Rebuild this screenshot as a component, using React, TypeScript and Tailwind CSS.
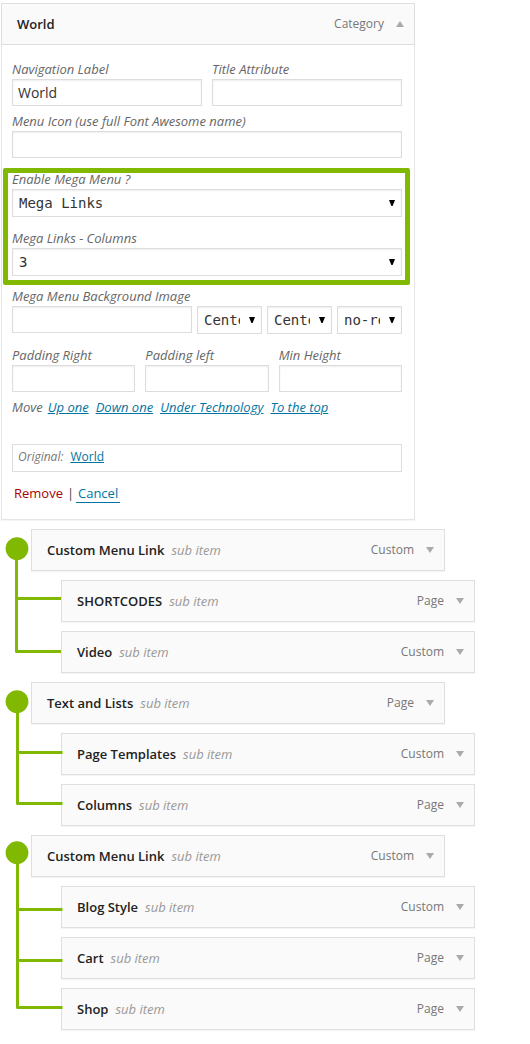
import type { ReactNode } from 'react'

type Item = { title: string; kind: string }
type Group = {
  parent: Item
  children: Item[]
  dotY: number
  lineX: number
  endX: number
  branches: number[]
}

const groups: Group[] = [
  {
    parent: { title: 'Custom Menu Link', kind: 'Custom' },
    children: [
      { title: 'SHORTCODES', kind: 'Page' },
      { title: 'Video', kind: 'Custom' },
    ],
    dotY: 19.6,
    lineX: 16.5,
    endX: 61,
    branches: [69.5, 122.5],
  },
  {
    parent: { title: 'Text and Lists', kind: 'Page' },
    children: [
      { title: 'Page Templates', kind: 'Custom' },
      { title: 'Columns', kind: 'Page' },
    ],
    dotY: 19.6,
    lineX: 17.5,
    endX: 62.5,
    branches: [70.5, 121.5],
  },
  {
    parent: { title: 'Custom Menu Link', kind: 'Custom' },
    children: [
      { title: 'Blog Style', kind: 'Custom' },
      { title: 'Cart', kind: 'Page' },
      { title: 'Shop', kind: 'Page' },
    ],
    dotY: 17.7,
    lineX: 17.5,
    endX: 62.5,
    branches: [74.5, 125.5, 172.5],
  },
]

const inputClass =
  'block h-[27px] w-full min-w-0 border border-[#ddd] bg-white px-[5px] text-sm text-[#333] shadow-[inset_0_1px_2px_rgba(0,0,0,0.07)] outline-none focus:border-[#5b9dd9]'

const linkClass = 'text-[#0074a2] underline'

function Triangle({ up = false }: { up?: boolean }) {
  return (
    <svg width="8" height="6" viewBox="0 0 8 6" fill="#aaa" aria-hidden="true">
      <path d={up ? 'M4 0 8 6H0Z' : 'M0 0H8L4 6Z'} />
    </svg>
  )
}

function Label({ htmlFor, children }: { htmlFor: string; children: ReactNode }) {
  return (
    <label htmlFor={htmlFor} className="block whitespace-nowrap text-[13px] leading-5 text-[#666] italic">
      {children}
    </label>
  )
}

function TextField({ id, label, value }: { id: string; label: string; value?: string }) {
  return (
    <div className="min-w-0">
      <Label htmlFor={id}>{label}</Label>
      <input id={id} type="text" defaultValue={value} className={inputClass} />
    </div>
  )
}

function Select({ id, label, options }: { id: string; label?: string; options: string[] }) {
  return (
    <div className="relative">
      <select
        id={id}
        aria-label={label}
        className="block h-7 w-full appearance-none border border-[#ddd] bg-white pr-[21px] pl-1.5 font-['DejaVu_Sans_Mono',monospace] text-sm text-[#333] shadow-[inset_0_1px_2px_rgba(0,0,0,0.07)] outline-none"
      >
        {options.map((option) => (
          <option key={option}>{option}</option>
        ))}
      </select>
      <svg
        className="pointer-events-none absolute top-[11px] right-[7px]"
        width="6"
        height="6"
        viewBox="0 0 6 6"
        aria-hidden="true"
      >
        <path d="M0 0H6L3.6 6H2.4Z" />
      </svg>
    </div>
  )
}

function ItemBar({ item, open = false, sub = true }: { item: Item; open?: boolean; sub?: boolean }) {
  return (
    <div className="flex h-[42px] w-full max-w-[414px] items-center justify-between border border-[#dfdfdf] bg-[#fafafa] pr-2.5 pl-[15px] shadow-[0_1px_1px_rgba(0,0,0,0.04)]">
      <div className="flex items-center gap-[7px] text-[13px] leading-5">
        <span className="font-semibold text-[#222]">{item.title}</span>
        {sub && <span className="text-[#999] italic">sub item</span>}
      </div>
      <button
        type="button"
        aria-expanded={open}
        className="flex items-center gap-3 text-xs text-[#777]"
      >
        {item.kind}
        <Triangle up={open} />
      </button>
    </div>
  )
}

function Connector({ dotY, lineX, endX, branches }: Group) {
  const last = branches[branches.length - 1]
  return (
    <svg
      className="pointer-events-none absolute top-0 left-0"
      width="64"
      height="200"
      viewBox="0 0 64 200"
      fill="none"
      stroke="#81b802"
      strokeWidth="3"
      strokeLinejoin="round"
      aria-hidden="true"
    >
      <circle cx="17" cy={dotY} r="11.4" fill="#81b802" stroke="none" />
      <path d={`M${lineX} ${dotY}V${last}H${endX}`} />
      {branches.slice(0, -1).map((y) => (
        <path key={y} d={`M${lineX} ${y}H${endX}`} />
      ))}
    </svg>
  )
}

function Settings() {
  return (
    <form className="border-x border-b border-[#e5e5e5] bg-white pt-3.5 pr-3 pb-4 pl-2.5 shadow-[0_1px_1px_rgba(0,0,0,0.04)]">
      <div className="grid grid-cols-2 gap-2.5">
        <TextField id="nav-label" label="Navigation Label" value="World" />
        <TextField id="title-attr" label="Title Attribute" />
      </div>
      <div className="mt-[5px]">
        <TextField id="menu-icon" label="Menu Icon (use full Font Awesome name)" />
      </div>

      <div className="relative mt-[11px] flex flex-col gap-[11px]">
        <div>
          <Label htmlFor="mega-menu">Enable Mega Menu ?</Label>
          <Select id="mega-menu" options={['Mega Links', 'Mega Posts', 'Disable']} />
        </div>
        <div>
          <Label htmlFor="mega-columns">Mega Links - Columns</Label>
          <Select id="mega-columns" options={['3', '2', '4', '5']} />
        </div>
        <div className="pointer-events-none absolute -top-px -right-2 -bottom-[9px] -left-[9px] rounded-[2px] border-[5px] border-[#81b802]" />
      </div>

      <div className="mt-2.5">
        <Label htmlFor="bg-image">Mega Menu Background Image</Label>
        <div className="grid grid-cols-[minmax(0,1fr)_65px_65px_65px] items-start gap-[5px]">
          <input id="bg-image" type="text" className={inputClass} />
          <Select id="bg-x" label="Horizontal position" options={['Center', 'Left', 'Right']} />
          <Select id="bg-y" label="Vertical position" options={['Center', 'Top', 'Bottom']} />
          <Select id="bg-repeat" label="Repeat" options={['no-repeat', 'repeat']} />
        </div>
      </div>

      <div className="mt-[11px] grid grid-cols-3 gap-2.5">
        <TextField id="pad-right" label="Padding Right" />
        <TextField id="pad-left" label="Padding left" />
        <TextField id="min-height" label="Min Height" />
      </div>

      <div className="mt-[5px] flex gap-[5px] text-[13px] leading-5 whitespace-nowrap text-[#666] italic">
        <span>Move</span>
        <div className="flex gap-[7px]">
          <a href="#up" className={linkClass}>Up one</a>
          <a href="#down" className={linkClass}>Down one</a>
          <a href="#under" className={linkClass}>Under Technology</a>
          <a href="#top" className={linkClass}>To the top</a>
        </div>
      </div>

      <div className="mt-[27px] flex h-7 items-center gap-[7px] border border-[#ddd] px-[5px] pb-0.5 text-xs">
        <span className="text-[#777] italic">Original:</span>
        <a href="#world" className={linkClass}>World</a>
      </div>

      <div className="mt-3 flex items-start px-0.5 text-[13px] leading-[18px]">
        <a href="#remove" className="text-[#a00]">Remove</a>
        <span className="w-[13px] pl-1 text-[#444]">|</span>
        <a href="#cancel" className="border-b border-[#0074a2] px-0.5 text-[#0074a2]">Cancel</a>
      </div>
    </form>
  )
}

export default function App() {
  return (
    <main className="min-h-screen max-w-[530px] bg-white pt-[3px] pb-3.5 font-['Open_Sans',sans-serif]">
      <section className="ml-px max-w-[414px]">
        <ItemBar item={{ title: 'World', kind: 'Category' }} open sub={false} />
        <Settings />
      </section>
      <div className="mt-[9px] flex flex-col gap-[9px]">
        {groups.map((group, index) => (
          <section key={index} className="relative flex flex-col gap-[9px]">
            <div className="pl-[31px]">
              <ItemBar item={group.parent} />
            </div>
            {group.children.map((child) => (
              <div key={child.title} className="pl-[61px]">
                <ItemBar item={child} />
              </div>
            ))}
            <Connector {...group} />
          </section>
        ))}
      </div>
    </main>
  )
}
